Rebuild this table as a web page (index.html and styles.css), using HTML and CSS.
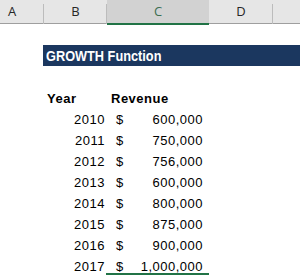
FILE: index.html
```html
<!DOCTYPE html>
<html lang="en">
<head>
  <meta charset="UTF-8" />
  <title>GROWTH Function</title>
  <link rel="stylesheet" href="styles.css">
</head>
<body>
  <div class="sheet">
    <div class="col-heads">
      <div class="ch ch-a">A</div>
      <div class="ch">B</div>
      <div class="ch selected">C</div>
      <div class="ch">D</div>
      <div class="ch last"></div>
    </div>

    <div class="row"></div>
    <div class="row">
      <div class="title"><span>GROWTH Function</span></div>
    </div>
    <div class="row"></div>
    <div class="row head">
      <div class="yr-label">Year</div>
      <div class="rev-label">Revenue</div>
    </div>
    <div class="row"><div class="yr">2010</div><div class="amt"><span>$</span><span>600,000</span></div></div>
    <div class="row"><div class="yr">2011</div><div class="amt"><span>$</span><span>750,000</span></div></div>
    <div class="row"><div class="yr">2012</div><div class="amt"><span>$</span><span>756,000</span></div></div>
    <div class="row"><div class="yr">2013</div><div class="amt"><span>$</span><span>600,000</span></div></div>
    <div class="row"><div class="yr">2014</div><div class="amt"><span>$</span><span>800,000</span></div></div>
    <div class="row"><div class="yr">2015</div><div class="amt"><span>$</span><span>875,000</span></div></div>
    <div class="row"><div class="yr">2016</div><div class="amt"><span>$</span><span>900,000</span></div></div>
    <div class="row"><div class="yr">2017</div><div class="amt active"><span>$</span><span>1,000,000</span></div></div>
  </div>
</body>
</html>
```
FILE: styles.css
```css
body {
  margin: 0;
  background: #fff;
  font-family: 'Liberation Sans', Arial, sans-serif;
  color: #000;
  overflow: hidden;
}

.sheet {
  width: 300px;
}

/* column letters */
.col-heads {
  display: grid;
  grid-template-columns: 44px 63px 102px 64px 1fr;
  height: 24px;
  background: #e6e6e6;
  border-bottom: 1px solid #9f9f9f;
  box-sizing: border-box;
}

.ch {
  position: relative;
  font-family: 'Open Sans', sans-serif;
  font-size: 13px;
  line-height: 23px;
  color: #262626;
  text-align: center;
}

.ch::after {
  content: '';
  position: absolute;
  right: 0;
  top: 4px;
  bottom: 0;
  width: 1px;
  background: #bcbcbc;
}

.ch-a {
  text-align: left;
  padding-left: 8px;
}

.ch.selected {
  background: #d2d2d2;
  color: #3d6e52;
  border-bottom: 2px solid #217346;
  margin-bottom: -1px;
}

.ch.selected::after,
.ch.last::after {
  display: none;
}

/* cell rows */
.row {
  display: grid;
  grid-template-columns: 44px 63px 102px 64px 1fr;
  height: 21px;
  font-size: 13px;
  letter-spacing: 0.5px;
  line-height: 19px;
}

.row > div {
  padding-top: 2px;
}

.title {
  grid-column: 2 / -1;
  margin-left: -1px;
  background: #1b375f;
  color: #fff;
  font-weight: bold;
  font-size: 15px;
  letter-spacing: 0;
  line-height: 18px;
  padding-left: 3px;
}

.title span {
  display: inline-block;
  transform: scaleX(0.85);
  transform-origin: left center;
}

.head {
  font-weight: bold;
}

.yr-label {
  grid-column: 2;
  padding-left: 3px;
}

.rev-label {
  grid-column: 3;
  padding-left: 4px;
}

.yr {
  grid-column: 2;
  text-align: right;
  padding-right: 2px;
}

.amt {
  grid-column: 3;
  display: flex;
  justify-content: space-between;
  padding: 0 6px 0 9px;
}

.amt.active {
  box-sizing: border-box;
  height: 20px;
  border-bottom: 2px solid #217346;
  margin-left: -1px;
  padding-left: 10px;
}
```
